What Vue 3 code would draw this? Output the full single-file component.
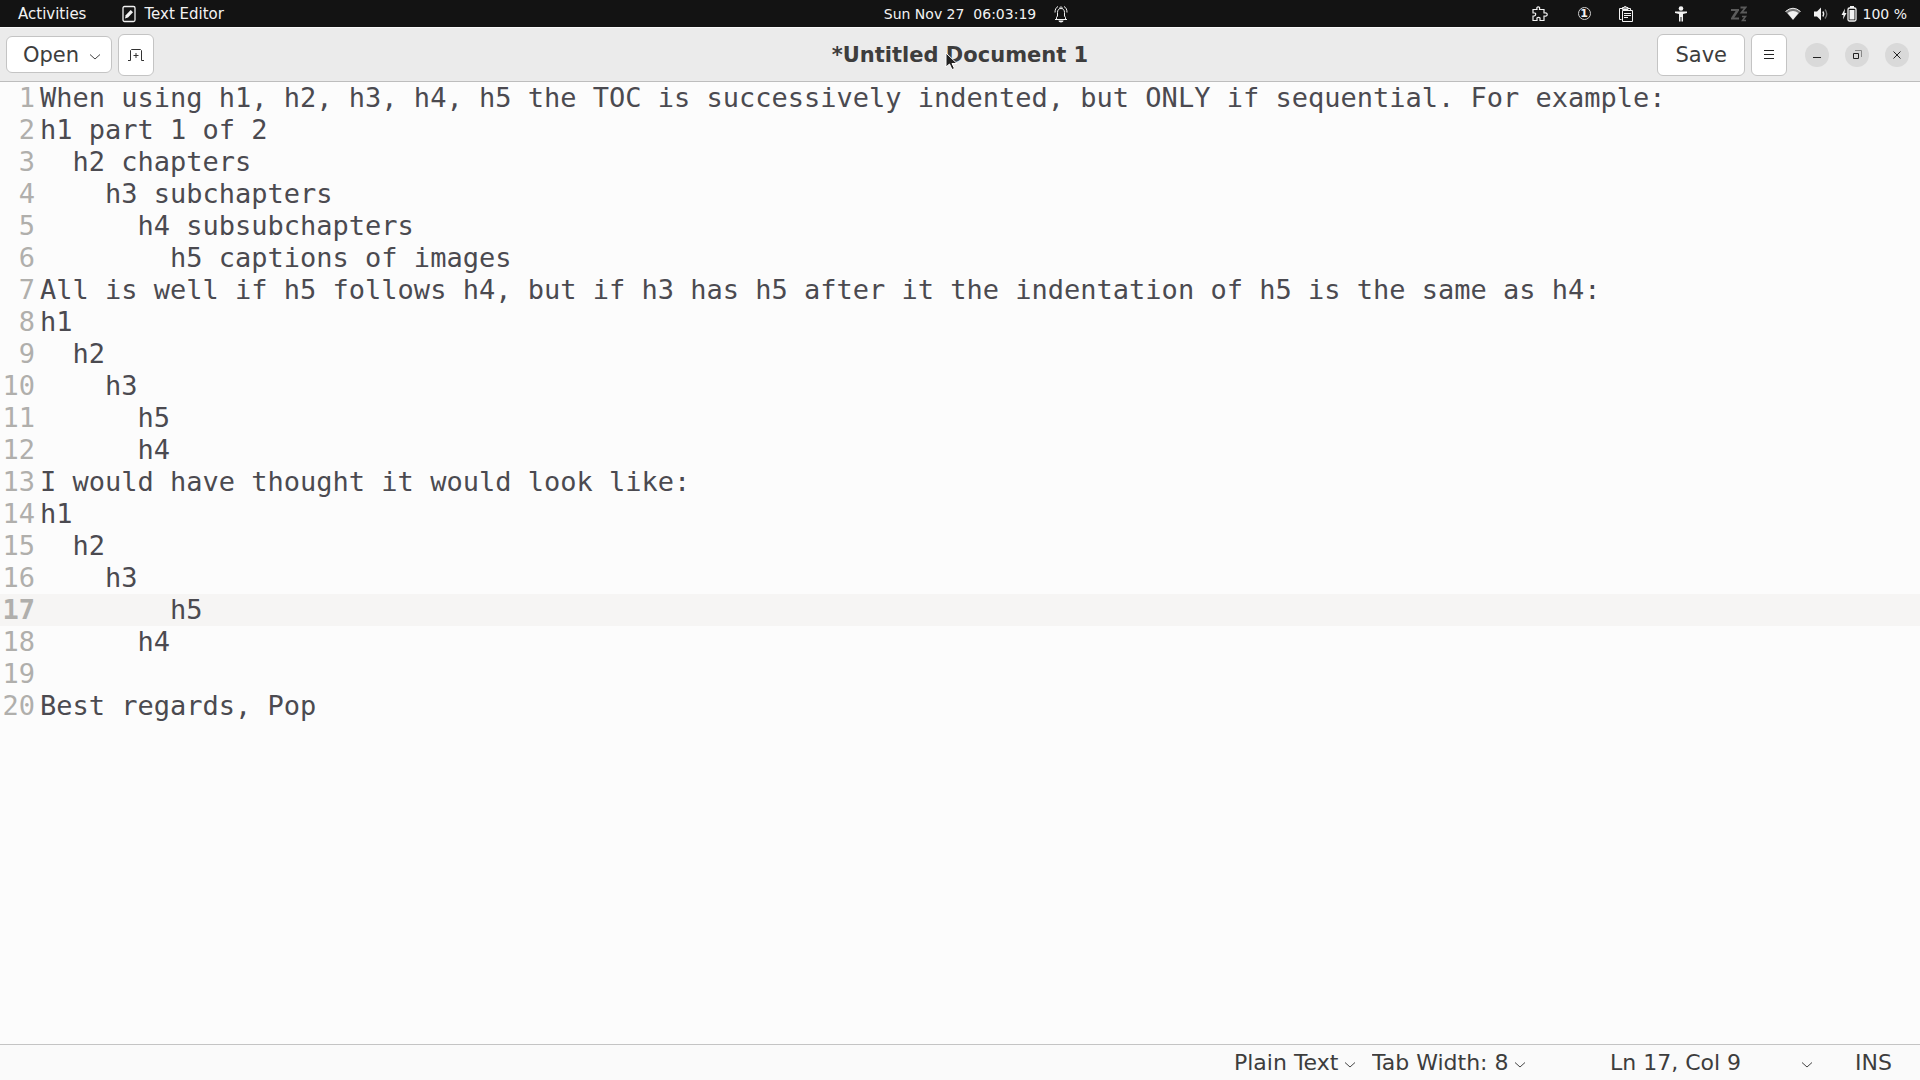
<script setup>
import {computed, ref} from "vue";

const text = ref(`When using h1, h2, h3, h4, h5 the TOC is successively indented, but ONLY if sequential. For example:
h1 part 1 of 2
  h2 chapters
    h3 subchapters
      h4 subsubchapters
        h5 captions of images
All is well if h5 follows h4, but if h3 has h5 after it the indentation of h5 is the same as h4:
h1
  h2
    h3
      h5
      h4
I would have thought it would look like:
h1
  h2
    h3
        h5
      h4

Best regards, Pop`)

const line = ref(17)
const column = ref(9)
const language = ref('Plain Text')
const tabWidth = ref(8)

const lineCount = computed(() => text.value.split('\n').length)

const updateCursor = (event) => {
  const before = event.target.value.slice(0, event.target.selectionStart).split('\n')
  line.value = before.length
  column.value = before[before.length - 1].length + 1
}
</script>

<template>
  <div class="desktop">
    <header class="topbar">
      <div class="topbar-left">
        <button>Activities</button>
        <button class="app-menu">
          <svg width="14" height="18" viewBox="0 0 14 18">
            <rect x="1" y="1.500" width="12" height="15" rx="1.500" fill="none" stroke="#f2f2f2" stroke-width="1.300"/>
            <path d="M3 13.500l.700-3.200 5-5.300 2.300 2.200-5 5.300z" fill="#f2f2f2"/>
          </svg>
          Text Editor
        </button>
      </div>
      <button class="clock">
        <span>Sun Nov 27&nbsp; 06:03:19</span>
        <svg width="14" height="18" viewBox="0 0 14 18" fill="none" stroke="#f2f2f2">
          <path d="M1 14.500h12M2.500 14V12.500L3.500 11V7.500c0-2.500 1.300-4 3.500-4s3.500 1.500 3.500 4V11l1 1.500V14M5.500 3.500C5.500 1.500 8.500 1.500 8.500 3.500M1 7.500C1 4.500 2 2.500 4 1.500M13 7.500c0-3-1-5-3-6"/>
          <path d="M4.500 15.500h5c0 2.500-5 2.500-5 0z" fill="#f2f2f2" stroke="none"/>
        </svg>
      </button>
      <div class="tray">
        <button class="puzzle" aria-label="Extensions">
          <svg width="16" height="16" viewBox="0 0 16 16" fill="none" stroke="#f2f2f2" stroke-width="1.200">
            <path d="M1 3.500h4V3C3.800.200 8.700.200 7.500 3v.500H12V7h.800c3.200-1 3.200 4 0 3H12v4.500H8V13c.800-2.200-3.800-2.200-3 0v1.500H1V10h1.200c2-.800 2-3.200 0-3H1z"/>
          </svg>
        </button>
        <button class="workspace" aria-label="Workspace 1">
          <span class="circled">1</span>
        </button>
        <button class="clipboard" aria-label="Clipboard">
          <svg width="14" height="16" viewBox="0 0 14 16" fill="none" stroke="#f2f2f2">
            <path d="M2.500 13.500h-2v-11h3M9 2.500h2.500v2"/>
            <path d="M3.500 3.500v-2H5C5 0 7.500 0 7.500 1.500H9v2z" fill="#999"/>
            <path d="M3.500 4.500h10v11h-10z" fill="#131313"/>
            <path d="M5 7.500h7M5 9.500h7M5 11.500h4"/>
          </svg>
        </button>
        <button class="access" aria-label="Accessibility">
          <svg width="12" height="16" viewBox="0 0 12 16" fill="#f2f2f2">
            <circle cx="6" cy="2.500" r="2.300"/>
            <path d="M0 5.500h12v1.600L8 8v7.500H6.500V11h-1v4.500H4V8L0 7.100z"/>
          </svg>
        </button>
        <button class="sleep" aria-label="Sleep">
          <svg width="16" height="16" viewBox="0 0 16 16" fill="none" stroke="#5b5b5b">
            <path d="M0 4h8M0 12.500h8" stroke-width="2"/>
            <path d="M6.500 4.500L1.500 12" stroke-width="2.500"/>
            <path d="M9.500 1.500h5L10.500 6.500H16" stroke-width="1.800"/>
            <path d="M11 10.500h3.500L11.500 14.500H15" stroke-width="1.500"/>
          </svg>
        </button>
        <button class="system" aria-label="System, battery 100 %">
          <svg width="16" height="14" viewBox="0 0 16 14">
            <path d="M.500 4.500Q8-2 15.500 4.500L8 13z" fill="#777"/>
            <path d="M.500 4.500Q8-2 15.500 4.500" fill="none" stroke="#f2f2f2"/>
            <path d="M2.500 6Q8 2 13.500 6L8 12.800z" fill="#f2f2f2"/>
          </svg>
          <svg width="16" height="14" viewBox="0 0 16 14" fill="none">
            <path d="M1 4.500h3L8 .500v13L4 9.500H1z" fill="#f2f2f2"/>
            <path d="M9.800 4.500q1.800 2.500 0 5" stroke="#f2f2f2" stroke-width="1.300"/>
            <path d="M12 2.500q3.600 4.500 0 9" stroke="#777" stroke-width="1.300"/>
          </svg>
          <span class="battery">
            <svg width="16" height="16" viewBox="0 0 16 16" fill="#f2f2f2">
              <path d="M4 2.500L.500 9H2.500L2 13.500 5.500 7h-2z"/>
              <rect x="7" y="2" width="8" height="13" rx="1.500" fill="none" stroke="#f2f2f2" stroke-width="1.300"/>
              <path d="M9 0h4v2H9zM8.500 4h5v9.500h-5z"/>
            </svg>
            100 %
          </span>
        </button>
      </div>
    </header>

    <section class="headerbar">
      <div class="actions">
        <button class="button open">
          Open
          <svg class="chevron" viewBox="0 0 12 8"><path d="M1 1.500l5 4.500 5-4.500"/></svg>
        </button>
        <button class="button square" aria-label="New tab">
          <svg width="16" height="12" viewBox="0 0 16 12" fill="none" stroke="#333">
            <path d="M0 11.500h2.500v-10l1-1h9l1 1v10H16M8 4v5M5.500 6.500h5"/>
          </svg>
        </button>
      </div>
      <h1>*Untitled Document 1</h1>
      <div class="actions right">
        <button class="button save">Save</button>
        <button class="button square" aria-label="Menu">
          <svg width="10" height="10" viewBox="0 0 10 10" stroke="#222"><path d="M0 .500h10M0 4.500h10M0 8.500h10"/></svg>
        </button>
        <div class="window-controls">
          <button aria-label="Minimize">
            <svg viewBox="0 0 10 10"><path d="M1 7.500h8"/></svg>
          </button>
          <button aria-label="Restore">
            <svg viewBox="0 0 10 10"><path d="M3 .500h6.500V7" stroke="#888"/><path d="M1.500 3.500h5v5h-5z"/></svg>
          </button>
          <button aria-label="Close">
            <svg viewBox="0 0 10 10"><path d="M1.500 1.500l7 7M8.500 1.500l-7 7"/></svg>
          </button>
        </div>
      </div>
      <svg class="pointer" viewBox="0 0 13 19">
        <path d="M1 1v14l3.500-3 2.500 5.500 2.500-1L7 11.500h5z" fill="#222" stroke="#fff"/>
      </svg>
    </section>

    <main class="editor">
      <ol class="gutter">
        <li v-for="n in lineCount" :key="n" :class="{current: n === line}">{{n}}</li>
      </ol>
      <textarea v-model="text" :rows="lineCount" aria-label="Document" wrap="off" spellcheck="false" @click="updateCursor" @keyup="updateCursor"></textarea>
    </main>

    <footer class="statusbar">
      <label class="dropdown">
        <select v-model="language" aria-label="Language">
          <option>Plain Text</option>
        </select>
        <svg class="chevron" viewBox="0 0 12 8"><path d="M1 1.500l5 4.500 5-4.500"/></svg>
      </label>
      <label class="dropdown">
        <select v-model="tabWidth" aria-label="Tab width">
          <option v-for="n in [2, 4, 8]" :key="n" :value="n">Tab Width: {{n}}</option>
        </select>
        <svg class="chevron" viewBox="0 0 12 8"><path d="M1 1.500l5 4.500 5-4.500"/></svg>
      </label>
      <button class="position">
        Ln {{line}}, Col {{column}}
        <svg class="chevron" viewBox="0 0 12 8"><path d="M1 1.500l5 4.500 5-4.500"/></svg>
      </button>
      <span>INS</span>
    </footer>
  </div>
</template>

<style>
body{
  margin: 0;
}
</style>

<style scoped>
.desktop{
  display: flex;
  flex-direction: column;
  min-height: 100vh;
  background-color: #fcfcfc;
  color: #3d3d3d;
  font-family: Verdana, "DejaVu Sans", sans-serif;
  font-size: 21px;
}
button, select, textarea{
  margin: 0;
  padding: 0;
  border: none;
  background: none;
  color: inherit;
  font: inherit;
}
svg{
  display: block;
  flex: none;
}

.topbar{
  display: grid;
  grid-template-columns: 1fr auto 1fr;
  align-items: center;
  height: 27px;
  background-color: #131313;
  color: #f2f2f2;
  font-size: 14px;
}
.topbar-left, .topbar button, .battery{
  display: flex;
  align-items: center;
}
.topbar-left{
  gap: 36px;
  padding-left: 18px;
  font-size: 15px;
}
.topbar .app-menu{
  gap: 8px;
}
.topbar .clock{
  gap: 18px;
  padding-left: 32px;
}
.tray{
  display: flex;
  align-items: center;
  justify-content: flex-end;
  padding-right: 13px;
}
.circled{
  width: 11px;
  height: 11px;
  border: 1px solid #ccc;
  border-radius: 50%;
  font-size: 11px;
  font-weight: bold;
  line-height: 11px;
  text-align: center;
}
.workspace{
  margin-left: 30px;
}
.clipboard{
  margin-left: 28px;
}
.access{
  margin-left: 42px;
}
.sleep{
  margin-left: 44px;
}
.topbar .system{
  gap: 12px;
  margin-left: 38px;
}
.battery{
  gap: 6px;
}

.headerbar{
  position: relative;
  display: grid;
  grid-template-columns: 1fr auto 1fr;
  align-items: center;
  height: 54px;
  box-sizing: border-box;
  border-top: 1px solid #fafafa;
  background-color: #ebebeb;
}
h1{
  margin: 0;
  font-size: 21px;
  font-weight: bold;
}
.actions{
  display: flex;
  align-items: center;
  gap: 6px;
  padding: 0 6px;
}
.right{
  justify-content: flex-end;
  padding-right: 11px;
}
.button{
  display: flex;
  align-items: center;
  justify-content: center;
  height: 42px;
  box-sizing: border-box;
  border: 1px solid #c4c4c4;
  border-radius: 6px;
  background-color: #fff;
}
.open{
  gap: 10px;
  height: 37px;
  padding: 0 10px 0 16px;
}
.square{
  width: 36px;
}
.save{
  padding: 0 17px;
}
.window-controls{
  display: flex;
  gap: 16px;
  margin-left: 12px;
}
.window-controls button{
  display: grid;
  place-items: center;
  width: 24px;
  height: 24px;
  border-radius: 50%;
  background-color: #d9d9d9;
}
.window-controls svg{
  width: 10px;
  height: 10px;
  fill: none;
  stroke: #222;
}
.chevron{
  width: 12px;
  height: 8px;
  margin-top: 4px;
  fill: none;
  stroke: #444;
  pointer-events: none;
}
.pointer{
  position: absolute;
  top: 24px;
  left: calc(50% - 15px);
  width: 13px;
  height: 19px;
}

.editor{
  position: relative;
  z-index: 0;
  display: flex;
  flex: 1;
  border-top: 1px solid #bdbdbd;
  font-family: "DejaVu Sans Mono", monospace;
  font-size: 27px;
  line-height: 32px;
}
.gutter{
  width: 35px;
  margin: 0;
  padding: 0;
  color: #b0afac;
  list-style: none;
}
.gutter li{
  display: flex;
  justify-content: flex-end;
  height: 32px;
}
.gutter .current{
  font-weight: bold;
}
.gutter .current::before{
  content: "";
  position: absolute;
  left: 0;
  z-index: -1;
  width: 100%;
  height: 32px;
  background-color: #f6f5f4;
}
textarea{
  flex: 1;
  min-width: 0;
  padding-left: 5px;
  outline: none;
  overflow: hidden;
  resize: none;
  color: #4b4a50;
}

.statusbar{
  display: flex;
  align-items: center;
  justify-content: flex-end;
  height: 35px;
  padding-right: 28px;
  border-top: 1px solid #c4c4c4;
  background-color: #fafafa;
  font-size: 22px;
}
.dropdown{
  display: flex;
  align-items: center;
  gap: 5px;
  margin-right: 16px;
}
.dropdown select{
  appearance: none;
}
.position{
  display: flex;
  align-items: center;
  gap: 60px;
  margin: 0 42px 0 68px;
}
</style>
